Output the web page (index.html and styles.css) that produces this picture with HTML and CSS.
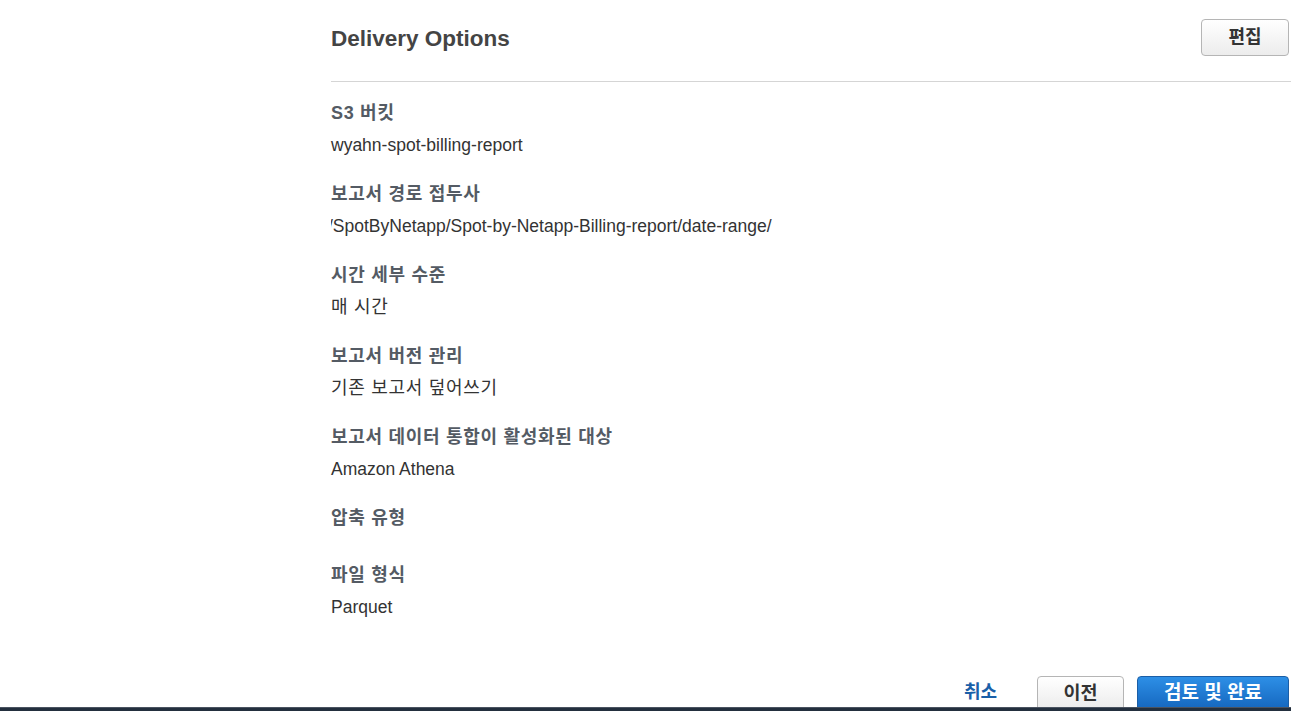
FILE: index.html
```html
<!DOCTYPE html>
<html lang="ko">
<head>
<meta charset="utf-8">
<title>Delivery Options</title>
<link rel="stylesheet" href="styles.css">
</head>
<body>
<div class="page">
  <div class="content">
    <header class="head">
      <h2 class="title">Delivery Options</h2>
      <button class="btn btn-edit">편집</button>
    </header>
    <dl class="fields">
      <div class="field">
        <dt class="label">S3 버킷</dt>
        <dd class="value">wyahn-spot-billing-report</dd>
      </div>
      <div class="field">
        <dt class="label">보고서 경로 접두사</dt>
        <dd class="value clip"><span class="clip-inner">/SpotByNetapp/Spot-by-Netapp-Billing-report/date-range/</span></dd>
      </div>
      <div class="field">
        <dt class="label">시간 세부 수준</dt>
        <dd class="value ko">매 시간</dd>
      </div>
      <div class="field">
        <dt class="label">보고서 버전 관리</dt>
        <dd class="value ko">기존 보고서 덮어쓰기</dd>
      </div>
      <div class="field">
        <dt class="label">보고서 데이터 통합이 활성화된 대상</dt>
        <dd class="value">Amazon Athena</dd>
      </div>
      <div class="field">
        <dt class="label">압축 유형</dt>
        <dd class="value empty"></dd>
      </div>
      <div class="field">
        <dt class="label">파일 형식</dt>
        <dd class="value">Parquet</dd>
      </div>
    </dl>
    <footer class="actions">
      <a class="link-cancel" href="#">취소</a>
      <button class="btn btn-prev">이전</button>
      <button class="btn btn-primary">검토 및 완료</button>
    </footer>
  </div>
  <div class="bottom-bar"></div>
</div>
</body>
</html>
```
FILE: styles.css
```css
* { box-sizing: border-box; }
html, body {
  margin: 0;
  padding: 0;
  background: #ffffff;
}
body {
  font-family: "Liberation Sans", Arial, "Noto Sans CJK KR", sans-serif;
  color: #16191f;
  overflow: hidden;
}
.page {
  width: 1291px;
  height: 711px;
  display: flex;
  flex-direction: column;
}
.content {
  margin-left: 331px;
  flex: 1;
  display: flex;
  flex-direction: column;
}
.head {
  height: 82px;
  border-bottom: 1px solid #d5d5d5;
  display: flex;
  align-items: flex-start;
  justify-content: space-between;
  padding-right: 2px;
}
.title {
  margin: 0;
  padding-top: 25px;
  font-size: 22.5px;
  line-height: 28px;
  font-weight: bold;
  color: #444444;
}
.btn {
  font-family: "Liberation Sans", Arial, "Noto Sans CJK KR", sans-serif;
  font-weight: bold;
  cursor: pointer;
  padding: 0;
}
.btn-edit {
  margin-top: 19px;
  width: 88px;
  height: 37px;
  border: 1px solid #b5b5b5;
  border-radius: 4px;
  background: linear-gradient(#ffffff, #ececec);
  color: #333333;
  font-size: 18px;
  line-height: 35px;
}
.fields {
  margin: 0;
  padding-top: 19px;
  display: flex;
  flex-direction: column;
  gap: 25px;
}
.field {
  display: flex;
  flex-direction: column;
  gap: 8px;
}
.label {
  margin: 0;
  font-size: 18px;
  letter-spacing: 0.7px;
  line-height: 24px;
  font-weight: bold;
  color: #545b64;
}
.value {
  margin: 0;
  font-size: 17.5px;
  line-height: 24px;
  color: #333333;
}
.value.ko {
  font-size: 18px;
  letter-spacing: 0.7px;
}
.value.empty {
  height: 0;
}
.clip {
  overflow: hidden;
  white-space: nowrap;
}
.clip-inner {
  display: inline-block;
  margin-left: -3px;
}
.actions {
  margin-top: auto;
  height: 31px;
  display: flex;
  justify-content: flex-end;
  align-items: flex-start;
  padding-right: 2px;
}
.link-cancel {
  margin-top: 4px;
  margin-right: 40px;
  font-size: 18px;
  line-height: 24px;
  font-weight: bold;
  color: #1a5fa8;
  text-decoration: none;
}
.btn-prev {
  width: 87px;
  height: 33px;
  margin-right: 13px;
  border: 1px solid #b5b5b5;
  border-radius: 4px 4px 0 0;
  background: linear-gradient(#ffffff, #ececec);
  color: #333333;
  font-size: 18.5px;
  line-height: 31px;
}
.btn-primary {
  width: 152px;
  height: 33px;
  border: 1px solid #1b5ea6;
  border-radius: 4px 4px 0 0;
  background: linear-gradient(#2d8fe6, #1668c0);
  color: #ffffff;
  font-size: 19px;
  line-height: 31px;
}
.bottom-bar {
  height: 4px;
  background: #232f3e;
  border-top: 1px solid #4a5360;
  position: relative;
  z-index: 1;
}
```
